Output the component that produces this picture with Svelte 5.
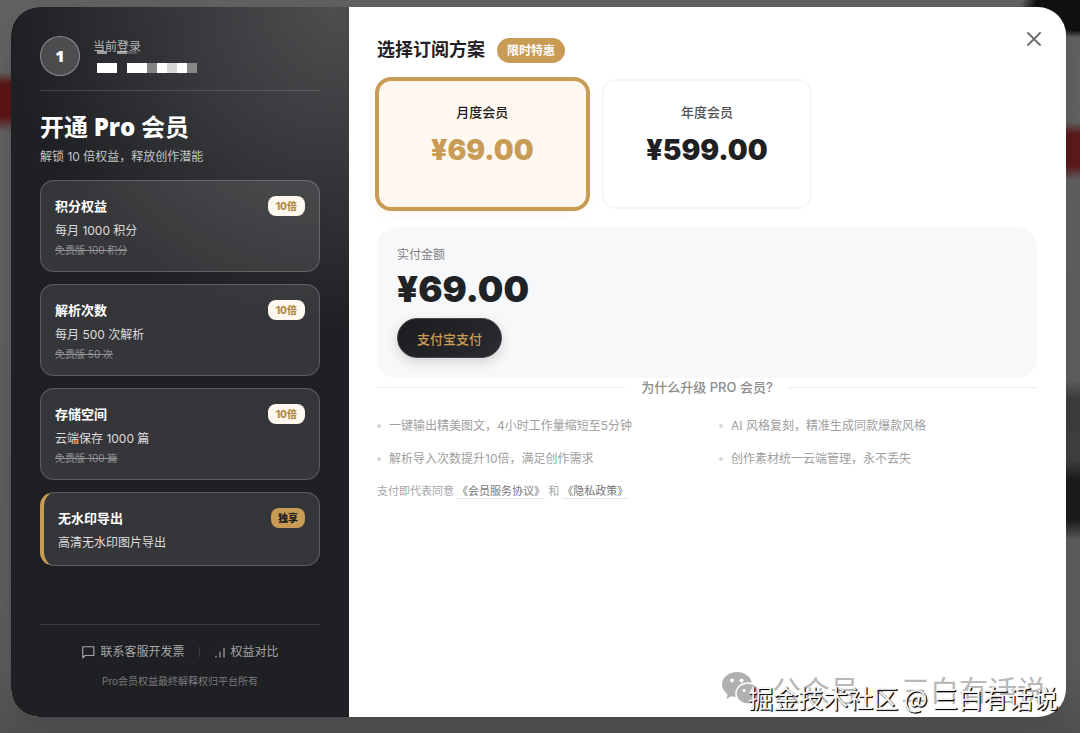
<script lang="ts">
  const benefits = [
    { title: '积分权益', value: '每月 1000 积分', free: '免费版 100 积分', tag: '10倍' },
    { title: '解析次数', value: '每月 500 次解析', free: '免费版 50 次', tag: '10倍' },
    { title: '存储空间', value: '云端保存 1000 篇', free: '免费版 100 篇', tag: '10倍' },
    { title: '无水印导出', value: '高清无水印图片导出', free: '', tag: '独享' },
  ];

  const plans = [
    { id: 'month', name: '月度会员', price: '69.00' },
    { id: 'year', name: '年度会员', price: '599.00' },
  ];

  const reasons = [
    '一键输出精美图文，4小时工作量缩短至5分钟',
    'AI 风格复刻，精准生成同款爆款风格',
    '解析导入次数提升10倍，满足创作需求',
    '创作素材统一云端管理，永不丢失',
  ];

  // brightness of each block in the hidden account name
  const mask = [1, 1, 0, 1, 1, 0.4, 1, 0.8, 1, 0.4];

  let selected = $state('month');
  let current = $derived(plans.find((p) => p.id === selected));
</script>

<div class="backdrop">
  <div class="modal" role="dialog" aria-label="开通 Pro 会员">
    <aside class="side">
      <div class="user">
        <div class="avatar">1</div>
        <div class="account">
          <span class="account-label">当前登录</span>
          <div class="mask">
            {#each mask as level}
              <i style="opacity: {level}"></i>
            {/each}
          </div>
        </div>
      </div>

      <h1>开通 <b>Pro</b> 会员</h1>
      <p class="sub">解锁 10 倍权益，释放创作潜能</p>

      <ul class="benefits">
        {#each benefits as item}
          <li class="benefit" class:exclusive={!item.free}>
            <div class="benefit-head">
              <h3>{item.title}</h3>
              <span class="tag">{item.tag}</span>
            </div>
            <p class="value">{item.value}</p>
            {#if item.free}
              <s class="free">{item.free}</s>
            {/if}
          </li>
        {/each}
      </ul>

      <footer>
        <div class="links">
          <button type="button">
            <svg width="14" height="14" viewBox="0 0 24 24" fill="none" stroke="currentColor" stroke-width="2" stroke-linejoin="round">
              <path d="M3 3h19v15H7l-4 4z" />
            </svg>
            联系客服开发票
          </button>
          <span class="sep"></span>
          <button type="button">
            <svg width="12" height="14" viewBox="0 0 12 14" fill="none" stroke="currentColor" stroke-width="1.2" stroke-linecap="round">
              <path d="M2 11v1M6 7v5M10 3v9" />
            </svg>
            权益对比
          </button>
        </div>
        <p class="note">Pro会员权益最终解释权归平台所有</p>
      </footer>
    </aside>

    <main class="main">
      <button class="close" type="button" aria-label="关闭">
        <svg width="14" height="14" viewBox="0 0 14 14" fill="none" stroke="currentColor" stroke-width="1.8" stroke-linecap="round">
          <path d="M1 1l12 12M13 1L1 13" />
        </svg>
      </button>

      <div class="heading">
        <h2>选择订阅方案</h2>
        <span class="promo">限时特惠</span>
      </div>

      <div class="plans">
        {#each plans as plan}
          <button
            type="button"
            class="plan"
            class:active={selected === plan.id}
            aria-pressed={selected === plan.id}
            onclick={() => (selected = plan.id)}
          >
            <span class="plan-name">{plan.name}</span>
            <span class="plan-price">¥{plan.price}</span>
          </button>
        {/each}
      </div>

      <section class="pay">
        <p class="pay-label">实付金额</p>
        <p class="amount">¥{current.price}</p>
        <button class="pay-button" type="button">支付宝支付</button>
      </section>

      <h4 class="why">为什么升级 PRO 会员?</h4>

      <ul class="reasons">
        {#each reasons as reason}
          <li>{reason}</li>
        {/each}
      </ul>

      <p class="legal">
        支付即代表同意 <a href="#terms">《会员服务协议》</a> 和 <a href="#privacy">《隐私政策》</a>
      </p>
    </main>
  </div>

  <div class="watermark account-mark">
    <svg width="38" height="34" viewBox="0 0 38 34">
      <path fill="#b0b0b0" d="M15 0C6.700 0 0 5.600 0 12.600c0 4 2.200 7.500 5.600 9.800L4.300 27l5.200-2.700c1.700.5 3.600.8 5.500.8 8.300 0 15-5.600 15-12.500S23.300 0 15 0z" />
      <path fill="#b0b0b0" stroke="#fff" stroke-width="1.500" d="M26 11c-6.800 0-12 4.600-12 10.500S19.200 32 26 32c1.500 0 3-.2 4.300-.6l4.200 2.200-1.200-3.800c2.900-2 4.700-5 4.700-8.300C38 15.600 32.800 11 26 11z" />
      <circle cx="10" cy="8.500" r="2" fill="#fff" />
      <circle cx="19.500" cy="8.500" r="2" fill="#fff" />
      <circle cx="22" cy="18.500" r="1.600" fill="#fff" />
      <circle cx="30" cy="18.500" r="1.600" fill="#fff" />
    </svg>
    <span>公众号 · 三白有话说</span>
  </div>
  <div class="watermark site-mark">掘金技术社区 @ 三白有话说</div>
</div>

<style>
  :global(body) {
    margin: 0;
  }

  .backdrop {
    position: relative;
    display: flex;
    box-sizing: border-box;
    min-height: 100vh;
    padding: 7px 14px 16px 11px;
    overflow: hidden;
    font-family: Inter, 'Noto Sans CJK SC', sans-serif;
    background:
      radial-gradient(ellipse 60px 30px at 100% 8px, #12110f 75%, transparent),
      linear-gradient(transparent 72px, #5c1515 84px, #5c1515 116px, transparent 132px) left / 14px 100% no-repeat,
      linear-gradient(transparent 122px, #5c1a1c 134px, #5c1a1c 166px, transparent 180px) right / 16px 100% no-repeat,
      linear-gradient(transparent 380px, #3c3c3c 400px, #404040 460px, #1c1c1c 480px, #1c1c1c 520px, transparent 540px) right / 16px 100% no-repeat,
      linear-gradient(#626262, #5c5c5c 90%, #505050);
  }

  h1, h2, h3, h4, p, ul {
    margin: 0;
    padding: 0;
  }

  ul {
    list-style: none;
  }

  button {
    padding: 0;
    border: 0;
    background: none;
    color: inherit;
    font: inherit;
    cursor: pointer;
  }

  .modal {
    flex: 1;
    display: grid;
    grid-template-columns: 338px 1fr;
    border-radius: 28px;
    overflow: hidden;
    background: #fff;
    box-shadow: 0 8px 24px rgba(0, 0, 0, 0.12);
  }

  .side {
    display: flex;
    flex-direction: column;
    padding: 29px;
    color: #fff;
    background:
      radial-gradient(ellipse 320px 320px at 96% 0, #4d4e50, rgba(77, 78, 80, 0.5) 50%, transparent),
      #1f2023;
  }

  .user {
    display: flex;
    align-items: center;
    gap: 13px;
    padding-bottom: 14px;
    border-bottom: 1px solid rgba(255, 255, 255, 0.14);
  }

  .avatar {
    display: grid;
    place-items: center;
    box-sizing: border-box;
    width: 40px;
    height: 40px;
    border: 1px solid rgba(255, 255, 255, 0.35);
    border-radius: 50%;
    background: rgba(255, 255, 255, 0.18);
    font-family: 'Open Sans', sans-serif;
    font-size: 16px;
    font-weight: 800;
  }

  .account {
    position: relative;
  }

  /* upper edge of the blocks, over the label */
  .account::before {
    content: '';
    position: absolute;
    top: 12px;
    left: 4px;
    width: 40px;
    height: 3px;
    background: linear-gradient(90deg, #ccc 10px, transparent 10px, transparent 20px, #ccc 20px, #ccc 30px, #666 30px);
    opacity: 0.7;
  }

  .account-label {
    display: block;
    font-size: 12px;
    line-height: 16px;
    color: #b4b5b7;
  }

  .mask {
    display: flex;
    margin: 8px 0 0 4px;
  }

  .mask i {
    width: 10px;
    height: 10px;
    background: #fff;
  }

  h1 {
    margin-top: 20px;
    font-size: 24px;
    font-weight: 700;
    line-height: 32px;
  }

  h1 b {
    font-family: 'Open Sans', sans-serif;
    font-weight: 800;
  }

  .sub {
    margin-top: 4px;
    font-size: 12px;
    line-height: 18px;
    color: #c4c5c7;
  }

  .benefits {
    display: flex;
    flex-direction: column;
    gap: 12px;
    margin-top: 14px;
  }

  .benefit {
    padding: 14px;
    border: 1px solid rgba(255, 255, 255, 0.2);
    border-radius: 14px;
    background: rgba(255, 255, 255, 0.1);
  }

  .exclusive {
    padding-bottom: 13px;
    border-left: 4px solid #c99c56;
  }

  .benefit-head {
    display: flex;
    justify-content: space-between;
    align-items: center;
    height: 21px;
  }

  h3 {
    font-size: 13px;
    font-weight: 600;
  }

  .tag {
    padding: 0 7px;
    border-radius: 8px;
    background: #fff8ee;
    color: #b08a4a;
    font-size: 10px;
    font-weight: 800;
    line-height: 20px;
  }

  .benefit:not(.exclusive) .tag {
    padding: 0 8px;
  }

  .exclusive .tag {
    background: #c99c56;
    color: #1f2023;
  }

  .value {
    margin-top: 6px;
    font-size: 12px;
    line-height: 18px;
    color: #dcdcdd;
  }

  .free {
    display: block;
    margin-top: 3px;
    font-size: 10px;
    line-height: 14px;
    color: #929395;
  }

  footer {
    margin-top: auto;
    padding-top: 17px;
    border-top: 1px solid rgba(255, 255, 255, 0.12);
    text-align: center;
  }

  .links {
    display: flex;
    justify-content: center;
    align-items: center;
    gap: 14px;
    font-size: 12px;
    line-height: 20px;
    color: #a5a6a7;
  }

  .links button {
    display: flex;
    align-items: center;
    gap: 5px;
  }

  .sep {
    width: 1px;
    height: 10px;
    background: #3c3d40;
  }

  .note {
    margin-top: 12px;
    font-size: 10px;
    line-height: 14px;
    color: #797a7c;
  }

  .main {
    position: relative;
    padding: 29px 29px 29px 28px;
  }

  .close {
    position: absolute;
    top: 24px;
    right: 24px;
    width: 16px;
    height: 16px;
    display: grid;
    place-items: center;
    color: #6b6b6b;
  }

  .heading {
    display: flex;
    align-items: center;
    gap: 12px;
    height: 28px;
  }

  h2 {
    font-size: 18px;
    font-weight: 600;
    line-height: 26px;
    color: #1f2023;
  }

  .promo {
    padding: 0 10px;
    border-radius: 13px;
    background: #c99c56;
    color: #fff;
    font-size: 12px;
    font-weight: 600;
    line-height: 25px;
  }

  .plans {
    display: grid;
    grid-template-columns: repeat(3, 1fr);
    gap: 14px;
    margin-top: 15px;
  }

  .plan {
    display: flex;
    flex-direction: column;
    align-items: center;
    height: 130px;
    padding-top: 21px;
    border: 2px solid #f6f6f6;
    border-radius: 14px;
    color: #1f2023;
  }

  .plan.active {
    border-color: #c99c56;
    background: #fef8f1;
    box-shadow: 0 0 0 2px #c99c56, 0 6px 12px rgba(201, 156, 86, 0.08);
  }

  .plan-name {
    font-size: 13px;
    font-weight: 500;
    line-height: 20px;
    color: #555;
  }

  .active .plan-name {
    color: #1f2023;
  }

  .plan-price {
    margin-top: 10px;
    font-size: 28px;
    font-weight: 900;
    line-height: 36px;
  }

  .active .plan-price {
    color: #c99c56;
  }

  .pay {
    margin-top: 18px;
    padding: 20px;
    border-radius: 20px;
    background: #f6f8fa;
  }

  .pay-label {
    font-size: 12px;
    line-height: 16px;
    color: #808080;
  }

  .amount {
    margin-top: 4px;
    font-size: 36px;
    font-weight: 900;
    line-height: 44px;
    color: #1f2326;
  }

  .pay-button {
    display: block;
    height: 40px;
    margin-top: 7px;
    padding: 0 19px;
    border: 1px solid #48484a;
    border-radius: 20px;
    background: linear-gradient(135deg, #1c1c1f, #2b2b30);
    box-shadow: 0 4px 12px rgba(0, 0, 0, 0.15);
    color: #c99c56;
    font-size: 13px;
    font-weight: 500;
  }

  .why {
    display: flex;
    align-items: center;
    gap: 16px;
    font-size: 13px;
    font-weight: 500;
    line-height: 18px;
    color: #8c8c8c;
  }

  .why::before,
  .why::after {
    content: '';
    flex: 1;
    height: 1px;
    background: #ededed;
  }

  .reasons {
    display: grid;
    grid-template-columns: 1fr 1fr;
    gap: 15px 24px;
    margin-top: 21px;
    font-size: 12px;
    line-height: 18px;
    color: #a0a0a0;
  }

  .reasons li {
    display: flex;
    align-items: center;
    gap: 8px;
  }

  .reasons li::before {
    content: '';
    width: 4px;
    height: 4px;
    border-radius: 50%;
    background: #d6d6d6;
  }

  .legal {
    margin-top: 15px;
    font-size: 11px;
    line-height: 16px;
    color: #a6a6a6;
  }

  .legal a {
    color: #777;
    text-decoration: none;
    border-bottom: 1px solid #e6e6e6;
  }

  .watermark {
    position: absolute;
    white-space: nowrap;
    pointer-events: none;
    font-family: 'Noto Sans CJK SC', sans-serif;
  }

  .account-mark {
    right: 34px;
    bottom: 24px;
    display: flex;
    align-items: center;
    gap: 12px;
    font-size: 29px;
    font-weight: 400;
    line-height: 40px;
    color: #b8b8b8;
  }

  .site-mark {
    right: 22px;
    bottom: 18px;
    font-size: 25px;
    line-height: 36px;
    color: #f4f4f4;
    text-shadow: 1px 1px 1px #000, 1px 1px 0 #444;
  }
</style>
